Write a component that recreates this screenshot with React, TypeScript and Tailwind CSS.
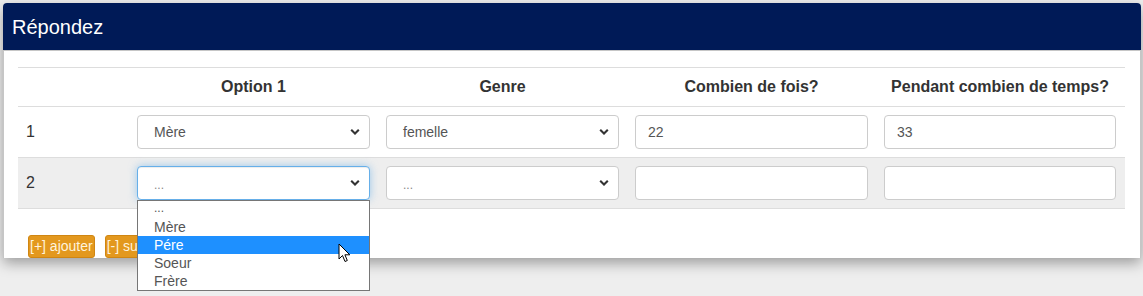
import React from "react";

const Chevron = () => (
  <svg width="10" height="7" viewBox="0 0 10 7" className="absolute right-[9px] top-1/2 -translate-y-1/2">
    <polyline points="1.2,1.3 5,5 8.8,1.3" fill="none" stroke="#333" strokeWidth="2.1" strokeLinejoin="miter" />
  </svg>
);

function FakeSelect({ value, muted, focused, children }: { value: string; muted?: boolean; focused?: boolean; children?: React.ReactNode }) {
  return (
    <div
      className={
        "relative h-[34px] w-full rounded-[4px] border bg-white pl-[16px] flex items-center text-[14px] " +
        (focused
          ? "border-[#66afe9] shadow-[inset_0_1px_1px_rgba(0,0,0,0.075),0_0_8px_rgba(102,175,233,0.6)]"
          : "border-[#cccccc]") +
        (muted ? " text-[#888]" : " text-[#555]")
      }
    >
      <span className={muted ? "text-[12px] leading-none pt-[4px]" : ""}>{value}</span>
      <Chevron />
      {children}
    </div>
  );
}

function FakeInput({ value }: { value?: string }) {
  return (
    <div className="h-[34px] w-full rounded-[4px] border border-[#cccccc] bg-white pl-[12px] flex items-center text-[14px] text-[#555]">
      {value}
    </div>
  );
}

const cols = "grid grid-cols-[111px_249px_249px_249px_248px]";

export default function App() {
  return (
    <div
      className="relative min-h-[296px] w-[1143px] bg-[#eeeeee] pt-[3px] pl-[3px]"
      style={{ fontFamily: '"Liberation Sans", Arial, sans-serif' }}
    >
      <div className="w-[1138px] rounded-t-[4px] bg-white shadow-[0_5px_14px_rgba(0,0,0,0.35)]">
        <div className="h-[47px] rounded-t-[4px] bg-[#001a57] pl-[9px] flex items-center text-[20px] text-white">
          Répondez
        </div>
        <div className="h-[208px] border-t border-x border-[#c6c6c6] pl-[14px] pr-[15px] pt-[16px]">
          <div className="border-t border-[#dddddd] text-[16px] text-[#333]">
            <div className={cols + " h-[39px] border-b border-[#dddddd] font-bold items-center"}>
              <div />
              <div className="text-center">Option 1</div>
              <div className="text-center">Genre</div>
              <div className="text-center">Combien de fois?</div>
              <div className="text-center">Pendant combien de temps?</div>
            </div>
            <div className={cols + " h-[51px] border-b border-[#dddddd] items-center"}>
              <div className="pl-[8px]">1</div>
              <div className="px-[8px]"><FakeSelect value="Mère" /></div>
              <div className="px-[8px]"><FakeSelect value="femelle" /></div>
              <div className="px-[8px]"><FakeInput value="22" /></div>
              <div className="px-[8px]"><FakeInput value="33" /></div>
            </div>
            <div className={cols + " h-[51px] border-b border-[#dddddd] bg-[#eeeeee] items-center"}>
              <div className="pl-[8px]">2</div>
              <div className="px-[8px]">
                <FakeSelect value="..." muted focused>
                  <div className="absolute left-[-1px] top-[33px] z-10 w-[233px] border border-[#767676] bg-white text-[14px] leading-[18px] text-[#555]">
                    <div className="pl-[16px] h-[17px] text-[12px] leading-[14px]">...</div>
                    <div className="pl-[16px] h-[18px]">Mère</div>
                    <div className="pl-[16px] h-[18px] bg-[#1e90ff] text-white">Pére</div>
                    <div className="pl-[16px] h-[18px]">Soeur</div>
                    <div className="pl-[16px] h-[18px]">Frère</div>
                  </div>
                </FakeSelect>
              </div>
              <div className="px-[8px]"><FakeSelect value="..." muted /></div>
              <div className="px-[8px]"><FakeInput /></div>
              <div className="px-[8px]"><FakeInput /></div>
            </div>
          </div>
          <div className="mt-[26px] ml-[10px] flex gap-[10px]">
            <div className="h-[23px] rounded-[3px] border border-[#d08612] bg-[#e3981e] px-[1px] flex items-center text-[14px] text-[#fff3dc]">
              [+] ajouter
            </div>
            <div className="h-[23px] whitespace-nowrap rounded-[3px] border border-[#d08612] bg-[#e3981e] px-[1px] flex items-center text-[14px] text-[#fff3dc]">
              [-] supprimer
            </div>
          </div>
        </div>
      </div>
      <svg width="14" height="21" viewBox="0 0 14 21" className="absolute left-[338px] top-[243px] z-20">
        <path d="M1 1 L1 16 L4.5 12.5 L7 18.5 L9.3 17.5 L6.9 11.8 L11.8 11.8 Z" fill="#fff" stroke="#000" strokeWidth="1" strokeLinejoin="miter" />
      </svg>
    </div>
  );
}
